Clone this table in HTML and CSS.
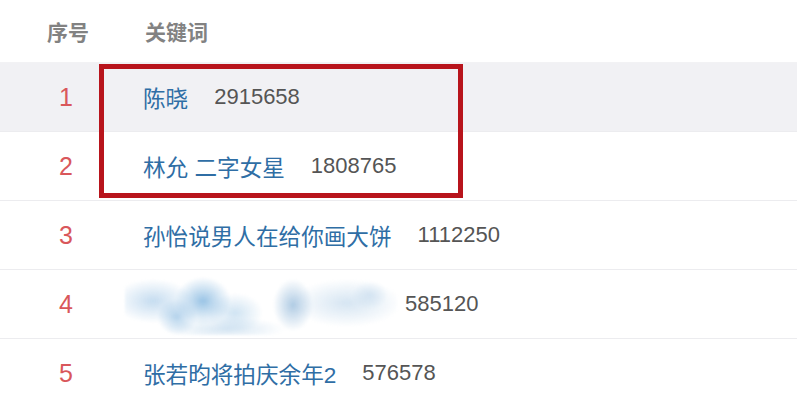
FILE: index.html
```html
<!DOCTYPE html>
<html lang="zh-CN">
<head>
  <meta charset="UTF-8">
  <meta name="viewport" content="width=device-width, initial-scale=1.0">
  <title>热搜关键词</title>
  <link rel="stylesheet" href="styles.css">
</head>
<body>
  <div class="board">
    <div class="row head">
      <div class="rank">序号</div>
      <div class="word">关键词</div>
    </div>

    <div class="marked">
      <div class="row shaded">
        <div class="rank">1</div>
        <div class="word"><a>陈晓</a><span class="count">2915658</span></div>
      </div>
      <div class="row">
        <div class="rank">2</div>
        <div class="word"><a>林允 二字女星</a><span class="count">1808765</span></div>
      </div>
      <div class="box"></div>
    </div>

    <div class="row">
      <div class="rank">3</div>
      <div class="word"><a>孙怡说男人在给你画大饼</a><span class="count">1112250</span></div>
    </div>
    <div class="row">
      <div class="rank">4</div>
      <div class="word"><span class="smudge"></span><span class="count tight">585120</span></div>
    </div>
    <div class="row">
      <div class="rank">5</div>
      <div class="word"><a>张若昀将拍庆余年2</a><span class="count">576578</span></div>
    </div>
  </div>
</body>
</html>
```

FILE: styles.css
```css
body {
  margin: 0;
  background: #fff;
  font-family: "Liberation Sans", "Noto Sans CJK SC", sans-serif;
}
.board {
  width: 797px;
}
.row {
  display: flex;
  align-items: center;
  height: 68px;
  border-bottom: 1px solid #ececef;
}
.row.head {
  height: 62px;
  border-bottom: 1px solid #f2f2f4;
}
.row.shaded {
  background: #f1f1f4;
}
.rank {
  width: 132px;
  text-align: center;
  font-size: 25px;
  color: #d9575b;
}
.word {
  display: flex;
  align-items: center;
  padding-left: 11px;
  font-size: 22.6px;
}
.head .rank,
.head .word {
  font-size: 21px;
  font-weight: bold;
  color: #828282;
}
.head .rank {
  padding-left: 2px;
}
.word a {
  color: #2f6ea5;
}
.count {
  margin-left: 26px;
  font-size: 22px;
  color: #555;
}
.count.tight {
  margin-left: 8px;
}
.marked {
  position: relative;
}
.box {
  position: absolute;
  left: 99px;
  top: 1px;
  width: 354px;
  height: 124px;
  border: 5px solid #b8141c;
}
.smudge {
  position: relative;
  z-index: 1;
  display: inline-block;
  width: 272px;
  height: 62px;
  margin-left: -18px;
  filter: blur(1.2px);
  background:
    radial-gradient(ellipse 28px 24px at 78px 28px, rgba(110, 170, 218, 0.7), transparent),
    radial-gradient(ellipse 20px 18px at 52px 44px, rgba(120, 175, 220, 0.55), transparent),
    radial-gradient(ellipse 40px 22px at 28px 28px, rgba(150, 192, 228, 0.55), transparent),
    radial-gradient(ellipse 28px 20px at 110px 40px, rgba(160, 200, 230, 0.5), transparent),
    radial-gradient(ellipse 20px 26px at 168px 32px, rgba(110, 160, 205, 0.55), transparent),
    radial-gradient(ellipse 55px 24px at 222px 30px, rgba(180, 208, 232, 0.55), transparent),
    radial-gradient(ellipse 60px 12px at 100px 56px, rgba(165, 200, 228, 0.45), transparent),
    radial-gradient(ellipse 18px 14px at 245px 22px, rgba(200, 220, 238, 0.6), transparent);
}
```
